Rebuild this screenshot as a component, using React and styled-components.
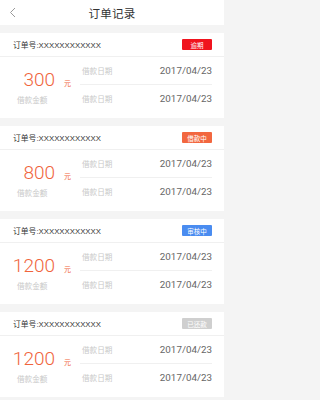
import React from "react";
import styled, { createGlobalStyle } from "styled-components";

const GlobalStyle = createGlobalStyle`
  html, body {
    margin: 0;
    padding: 0;
    background-color: #f4f4f4;
  }
  body {
    font-family: "Liberation Sans", "Noto Sans CJK SC", sans-serif;
    -webkit-font-smoothing: antialiased;
  }
`;

const orders = [
  { amount: "300", status: "逾期", color: "#f0141e" },
  { amount: "800", status: "借款中", color: "#f2673f" },
  { amount: "1200", status: "审核中", color: "#4a8cf0" },
  { amount: "1200", status: "已还款", color: "#cfcfcf" },
];

const RegistroOrdenes = () => {
  return (
    <>
      <GlobalStyle />
      <Pagina>
        <Cabecera>
          <Volver>
            <svg width="7" height="11" viewBox="0 0 7 11">
              <path d="M6 1 L1.5 5.5 L6 10" fill="none" stroke="#9a9a9a" strokeWidth="1" />
            </svg>
          </Volver>
          <Titulo>订单记录</Titulo>
        </Cabecera>

        <Lista>
          {orders.map((orden, i) => (
            <Tarjeta key={i}>
              <FilaOrden>
                <NumeroOrden>订单号:XXXXXXXXXXXX</NumeroOrden>
                <Estado color={orden.color}>{orden.status}</Estado>
              </FilaOrden>
              <Cuerpo>
                <ColumnaMonto>
                  <Monto>
                    <Cifra>{orden.amount}</Cifra>
                    <Unidad>元</Unidad>
                  </Monto>
                  <Etiqueta>借款金额</Etiqueta>
                </ColumnaMonto>
                <ColumnaFechas>
                  <FilaFecha>
                    <Etiqueta>借款日期</Etiqueta>
                    <Fecha>2017/04/23</Fecha>
                  </FilaFecha>
                  <FilaFecha>
                    <Etiqueta>借款日期</Etiqueta>
                    <Fecha>2017/04/23</Fecha>
                  </FilaFecha>
                </ColumnaFechas>
              </Cuerpo>
            </Tarjeta>
          ))}
        </Lista>
      </Pagina>
    </>
  );
};

const Pagina = styled.div`
  width: 224px;
  min-height: 400px;
  background-color: #f4f4f4;
`;

const Cabecera = styled.div`
  height: 25px;
  background-color: #ffffff;
  display: flex;
  justify-content: center;
  align-items: center;
  position: relative;
`;

const Volver = styled.div`
  position: absolute;
  left: 9px;
  top: 7px;
  display: flex;
`;

const Titulo = styled.div`
  font-size: 11.5px;
  color: #333333;
  letter-spacing: 0.3px;
`;

const Lista = styled.div`
  display: flex;
  flex-direction: column;
  gap: 8px;
  padding-top: 8px;
`;

const Tarjeta = styled.div`
  background-color: #ffffff;
  height: 85px;
  display: flex;
  flex-direction: column;
`;

const FilaOrden = styled.div`
  height: 24px;
  display: flex;
  align-items: center;
  justify-content: space-between;
  padding: 0 12px 0 13px;
  border-bottom: 1px solid #f0f0f0;
`;

const NumeroOrden = styled.span`
  font-size: 7.8px;
  color: #333333;
`;

const Estado = styled.span`
  width: 30px;
  height: 11px;
  background-color: ${(p) => p.color};
  color: #ffffff;
  font-size: 6.5px;
  display: flex;
  align-items: center;
  justify-content: center;
  border-radius: 1px;
`;

const Cuerpo = styled.div`
  flex: 1;
  display: flex;
`;

const ColumnaMonto = styled.div`
  width: 80px;
  display: flex;
  flex-direction: column;
  padding-top: 13px;
  box-sizing: border-box;
  & > span {
    padding-left: 17px;
    margin-top: 5px;
  }
`;

const Monto = styled.div`
  display: flex;
  align-items: flex-end;
  height: 19px;
`;

const Cifra = styled.span`
  width: 55px;
  text-align: right;
  font-family: Roboto, "Liberation Sans", sans-serif;
  font-weight: 300;
  font-size: 19px;
  line-height: 19px;
  color: #f0643c;
`;

const Unidad = styled.span`
  font-size: 7px;
  color: #f0643c;
  margin-left: 9px;
  line-height: 9px;
  padding-bottom: 1px;
`;

const Etiqueta = styled.span`
  font-size: 7.6px;
  color: #c8c8c8;
`;

const ColumnaFechas = styled.div`
  flex: 1;
  display: flex;
  flex-direction: column;
  padding-right: 12px;
  padding-bottom: 6px;
`;

const FilaFecha = styled.div`
  height: 27px;
  display: flex;
  align-items: center;
  justify-content: space-between;
  padding-left: 2px;
  & + & {
    border-top: 1px solid #f0f0f0;
  }
`;

const Fecha = styled.span`
  font-family: Roboto, "Liberation Sans", sans-serif;
  font-size: 9.8px;
  color: #666666;
`;

export default RegistroOrdenes;
